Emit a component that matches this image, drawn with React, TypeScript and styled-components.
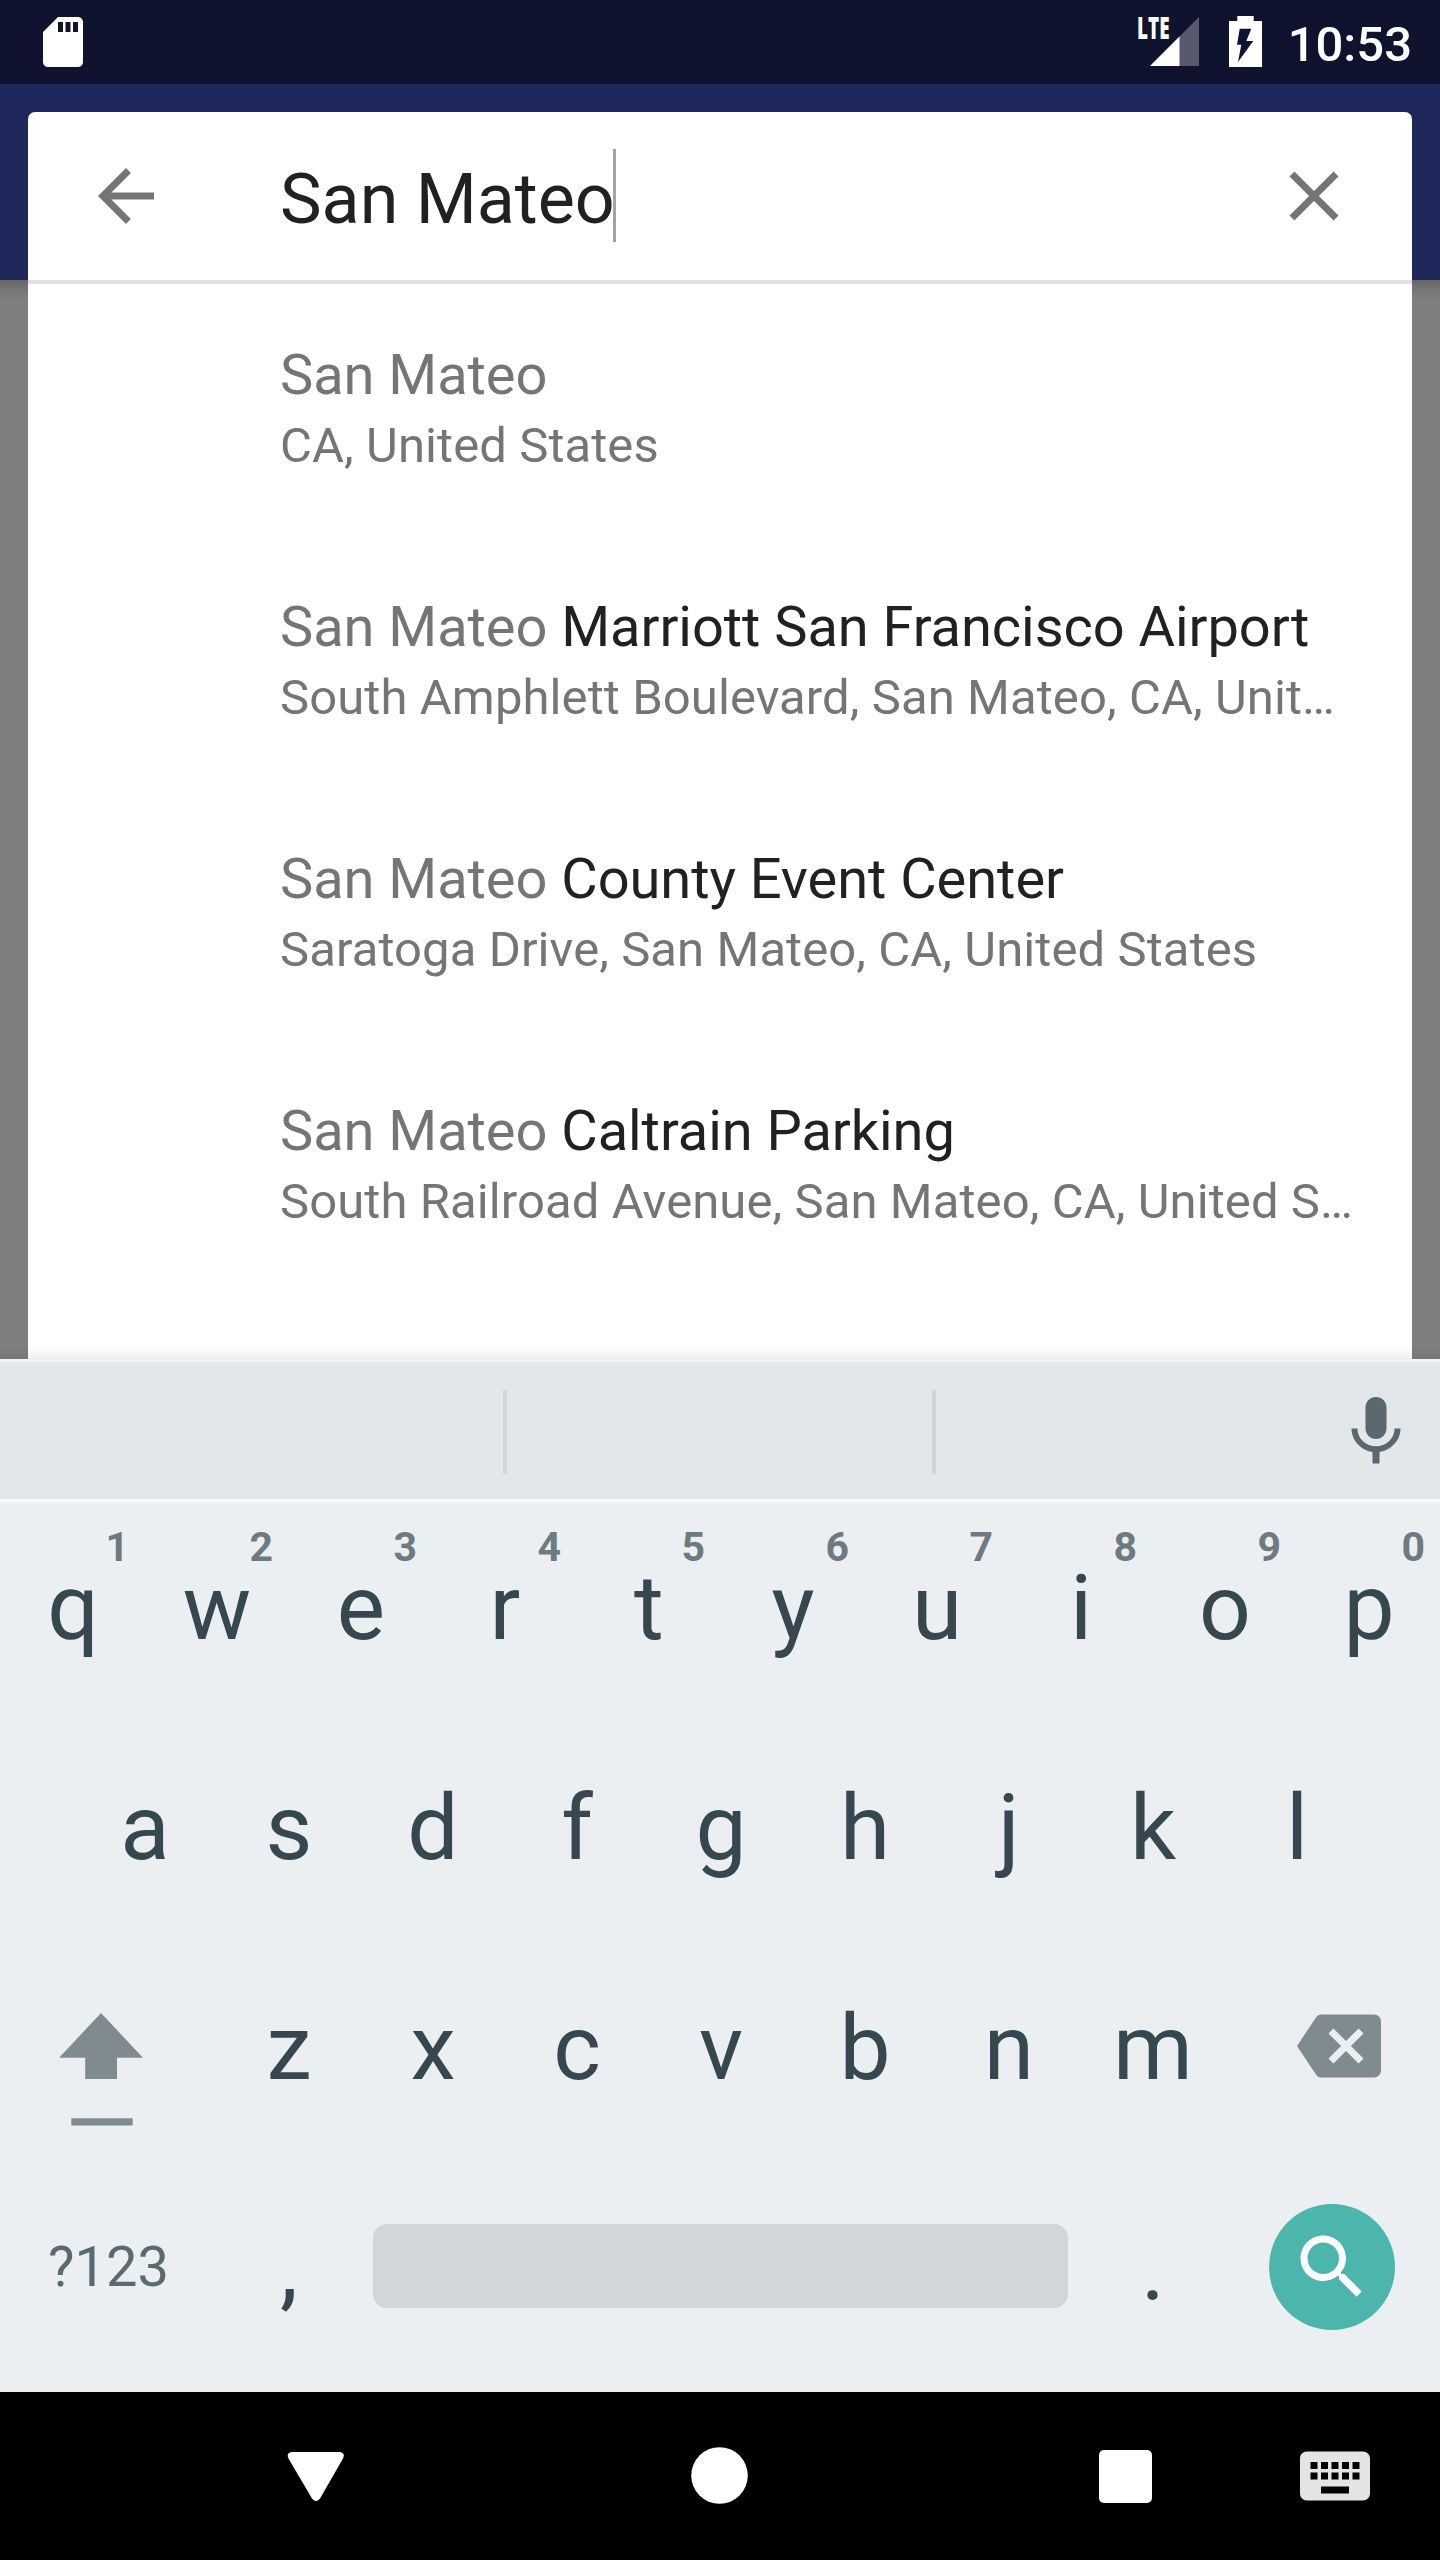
import React from "react";
import styled, { createGlobalStyle } from "styled-components";

const GlobalStyle = createGlobalStyle`
  * { box-sizing: border-box; }
  body {
    margin: 0;
    background: #7f7f7f;
    font-family: Roboto, "Liberation Sans", sans-serif;
  }
  svg { display: block; flex: none; }
`;

const Screen = styled.div`
  width: 1440px;
  height: 2560px;
  display: flex;
  flex-direction: column;
  overflow: hidden;
  background: #7f7f7f;
`;

const StatusBar = styled.header`
  flex: none;
  height: 84px;
  display: flex;
  align-items: flex-start;
  padding: 0 28px 0 33px;
  background: #0f132e;
  color: #fff;
`;

const SdIcon = styled.svg`
  margin-top: 12px;
`;

const StatusIcons = styled.div`
  margin-left: auto;
  display: flex;
`;

const Signal = styled.div`
  position: relative;
  width: 49px;
  margin: 17px 30px 0 0;
`;

const NetworkLabel = styled.span`
  position: absolute;
  left: -13px;
  top: -4px;
  font: 800 30px/30px "Open Sans", "Noto Sans", sans-serif;
  transform: scaleX(0.63);
  transform-origin: left center;
`;

const Battery = styled.svg`
  margin: 16px 26px 0 0;
`;

const Clock = styled.span`
  margin-top: 16px;
  font-size: 49px;
  line-height: 58px;
  font-weight: 500;
`;

const Backdrop = styled.main`
  flex: none;
  height: 1275px;
  padding: 28px 28px 0;
  background: linear-gradient(
    to bottom,
    #1f285b 196px,
    #656565 196px,
    #767676 206px,
    #7f7f7f 218px,
    #7f7f7f 1260px,
    #777 1275px
  );
`;

const Card = styled.section`
  height: 1247px;
  border-radius: 7px 7px 0 0;
  background: linear-gradient(to bottom, #fff 1231px, #fbfbfb 1238px, #eee 1247px);
`;

const SearchBar = styled.div`
  height: 172px;
  display: flex;
  align-items: flex-start;
  padding: 42px 56px 0;
  border-bottom: 4px solid #e0e0e0;
`;

const Query = styled.div`
  flex: 1;
  display: flex;
  margin: 4px 0 0 112px;
  color: #212121;
  font-size: 70px;
  line-height: 82px;
  white-space: pre;
`;

const Caret = styled.span`
  width: 3px;
  height: 93px;
  margin: -9px 0 0 -2px;
  background: #a4a4a4;
`;

const Results = styled.ul`
  list-style: none;
  margin: 0;
  padding: 0;
`;

const Result = styled.li`
  height: 252px;
  padding: 58px 40px 0 252px;
  color: #757575;
  white-space: nowrap;
`;

const Name = styled.div`
  font-size: 56px;
  line-height: 66px;
  letter-spacing: -0.05px;
`;

const Rest = styled.span`
  color: #212121;
`;

const Address = styled.div`
  margin-top: 9px;
  font-size: 49px;
  line-height: 58px;
  letter-spacing: 0.09px;
`;

const Suggestions = styled.div`
  flex: none;
  height: 144px;
  display: flex;
  align-items: flex-start;
  padding: 28px 22px 0 0;
  border-top: 3px solid #f0f1f1;
  border-bottom: 4px solid #f5f7f9;
  background: #e3e7ea;
`;

const Slot = styled.div<{ $width: number; $divided?: boolean }>`
  width: ${(p) => p.$width}px;
  height: 84px;
  border-right: ${(p) => (p.$divided ? "4px solid #d0d5d8" : "0")};
`;

const Keyboard = styled.section`
  flex: none;
  height: 889px;
  background: #ebeff2;
  color: #37474f;
`;

const KeyRow = styled.div`
  height: 220px;
  display: flex;
  justify-content: center;
`;

const Key = styled.div<{ $width?: number }>`
  position: relative;
  width: ${(p) => p.$width ?? 144}px;
  height: 220px;
  padding: 52px 0 0 ${(p) => (p.$width ? 0 : 2)}px;
  display: flex;
  justify-content: center;
  align-items: flex-start;
  font-size: 91px;
  line-height: 106px;
`;

const Hint = styled.span`
  position: absolute;
  top: 20px;
  right: 15px;
  font-size: 41px;
  line-height: 48px;
  font-weight: 700;
  color: #6e7a80;
`;

const ModeLabel = styled.span`
  margin: 19px 0 0 1px;
  font-size: 56px;
  line-height: 66px;
  color: #5b6a70;
`;

const SpaceBar = styled.div`
  width: 695px;
  height: 84px;
  margin-top: 9px;
  border-radius: 14px;
  background: #d1d6d9;
`;

const SearchKey = styled.div`
  width: 126px;
  height: 126px;
  margin-top: -11px;
  padding: 21px;
  border-radius: 50%;
  background: #4db6ac;
`;

const KeyIcon = styled.svg<{ $top: number; $left?: number }>`
  margin: ${(p) => p.$top}px 0 0 ${(p) => p.$left ?? 0}px;
`;

const NavBar = styled.nav`
  flex: none;
  height: 168px;
  display: grid;
  grid-template-columns: 192px 248px 560px 252px 166px;
  align-items: center;
  justify-items: center;
  background: #000;
`;

const NavCell = styled.div<{ $column: number }>`
  grid-column: ${(p) => p.$column};
`;

const results = [
  { rest: "", address: "CA, United States" },
  { rest: "Marriott San Francisco Airport", address: "South Amphlett Boulevard, San Mateo, CA, Unit…" },
  { rest: "County Event Center", address: "Saratoga Drive, San Mateo, CA, United States" },
  { rest: "Caltrain Parking", address: "South Railroad Avenue, San Mateo, CA, United S…" },
];

const topKeys = "qwertyuiop".split("");
const homeKeys = "asdfghjkl".split("");
const bottomKeys = "zxcvbnm".split("");

export default function App() {
  return (
    <>
      <GlobalStyle />
      <Screen>
        <StatusBar>
          <SdIcon width="60" height="60" viewBox="0 0 24 24" fill="#fff">
            <path d="M18 2h-8L4 8v12c0 1.1.9 2 2 2h12c1.1 0 2-.9 2-2V4c0-1.1-.9-2-2-2zm-6 6h-2V4h2v4zm3 0h-2V4h2v4zm3 0h-2V4h2v4z" />
          </SdIcon>
          <StatusIcons>
            <Signal>
              <NetworkLabel>LTE</NetworkLabel>
              <svg width="49" height="49" viewBox="0 0 49 49">
                <path d="M0 49H49V0z" fill="#fff" fillOpacity="0.3" />
                <path d="M0 49H29.5V19.5z" fill="#fff" />
              </svg>
            </Signal>
            <Battery width="33" height="51" viewBox="0 0 33 51">
              <path
                fill="#fff"
                fillRule="evenodd"
                d="M8.3 0h16.4v5H33v46H0V5h8.3zM10.7 12.7 8 28.7h4.3L9 46 24.3 25h-7l5-12.3z"
              />
            </Battery>
            <Clock>10:53</Clock>
          </StatusIcons>
        </StatusBar>

        <Backdrop>
          <Card>
            <SearchBar>
              <svg width="84" height="84" viewBox="0 0 24 24" fill="#757575">
                <path d="M20 11H7.83l5.59-5.59L12 4l-8 8 8 8 1.41-1.41L7.83 13H20v-2z" />
              </svg>
              <Query>
                San Mateo
                <Caret />
              </Query>
              <svg width="84" height="84" viewBox="0 0 24 24" fill="#757575">
                <path d="M19 6.41L17.59 5 12 10.59 6.41 5 5 6.41 10.59 12 5 17.59 6.41 19 12 13.41 17.59 19 19 17.59 13.41 12z" />
              </svg>
            </SearchBar>
            <Results>
              {results.map((item) => (
                <Result key={item.address}>
                  <Name>
                    San Mateo <Rest>{item.rest}</Rest>
                  </Name>
                  <Address>{item.address}</Address>
                </Result>
              ))}
            </Results>
          </Card>
        </Backdrop>

        <Suggestions>
          <Slot $width={507} $divided />
          <Slot $width={429} $divided />
          <Slot $width={398} />
          <svg width="84" height="84" viewBox="0 0 24 24" fill="#5b686f">
            <path d="M12 14c1.66 0 3-1.34 3-3V5c0-1.66-1.34-3-3-3S9 3.34 9 5v6c0 1.66 1.34 3 3 3zm5.3-3c0 3-2.54 5.1-5.3 5.1S6.7 14 6.7 11H5c0 3.41 2.72 6.23 6 6.72V21h2v-3.28c3.28-.48 6-3.3 6-6.72h-1.7z" />
          </svg>
        </Suggestions>

        <Keyboard>
          <KeyRow>
            {topKeys.map((letter, i) => (
              <Key key={letter}>
                {letter}
                <Hint>{(i + 1) % 10}</Hint>
              </Key>
            ))}
          </KeyRow>
          <KeyRow>
            {homeKeys.map((letter) => (
              <Key key={letter}>{letter}</Key>
            ))}
          </KeyRow>
          <KeyRow>
            <Key $width={216}>
              <KeyIcon $top={18} width="96" height="113" viewBox="0 0 96 113" fill="#808b8f">
                <path d="M41 0 83 44.8H57V66H25.2V44.8H-1z" />
                <path d="M11.3 105.3h61.4v7.2H11.3z" />
              </KeyIcon>
            </Key>
            {bottomKeys.map((letter) => (
              <Key key={letter}>{letter}</Key>
            ))}
            <Key $width={216}>
              <KeyIcon $top={9} $left={14} width="84" height="84" viewBox="0 0 24 24" fill="#808b8f">
                <path d="M22 3H7c-.69 0-1.23.35-1.59.88L0 12l5.41 8.11c.36.53.9.89 1.59.89h15c1.1 0 2-.9 2-2V5c0-1.1-.9-2-2-2zm-3 12.59L17.59 17 14 13.41 10.41 17 9 15.59 12.59 12 9 8.41 10.41 7 14 10.59 17.59 7 19 8.41 15.41 12 19 15.59z" />
              </KeyIcon>
            </Key>
          </KeyRow>
          <KeyRow>
            <Key $width={216}>
              <ModeLabel>?123</ModeLabel>
            </Key>
            <Key>,</Key>
            <Key $width={720}>
              <SpaceBar />
            </Key>
            <Key>.</Key>
            <Key $width={216}>
              <SearchKey>
                <svg width="84" height="84" viewBox="0 0 24 24" fill="#fff">
                  <path d="M15.5 14h-.79l-.28-.27C15.41 12.59 16 11.11 16 9.5 16 5.91 13.09 3 9.5 3S3 5.91 3 9.5 5.91 16 9.5 16c1.61 0 3.09-.59 4.23-1.57l.27.28v.79l5 4.99L20.49 19l-4.99-5zm-6 0C7.01 14 5 11.99 5 9.5S7.01 5 9.5 5 14 7.01 14 9.5 11.99 14 9.5 14z" />
                </svg>
              </SearchKey>
            </Key>
          </KeyRow>
        </Keyboard>

        <NavBar>
          <NavCell $column={2}>
            <svg width="58" height="58" viewBox="0 0 58 58" fill="#fff">
              <path d="M4.500 5H53Q58.500 6 56 11.500L33 51.500Q29 56.500 25 51.500L1.500 11.500Q-1 6 4.500 5z" />
            </svg>
          </NavCell>
          <NavCell $column={3}>
            <svg width="58" height="58" viewBox="0 0 58 58" fill="#fff">
              <circle cx="28.500" cy="28.500" r="28.300" />
            </svg>
          </NavCell>
          <NavCell $column={4}>
            <svg width="54" height="54" viewBox="0 0 54 54" fill="#fff">
              <rect y="1" width="53" height="53" rx="5" />
            </svg>
          </NavCell>
          <NavCell $column={5}>
            <svg width="84" height="85" viewBox="0 0 24 24.286" fill="#e4e4e4">
              <path d="M20 5H4c-1.1 0-2 .9-2 2v10c0 1.1.9 2 2 2h16c1.1 0 2-.9 2-2V7c0-1.1-.9-2-2-2zm-9 3h2v2h-2V8zm0 3h2v2h-2v-2zM8 8h2v2H8V8zm0 3h2v2H8v-2zm-1 2H5v-2h2v2zm0-3H5V8h2v2zm9 7H8v-2h8v2zm0-4h-2v-2h2v2zm0-3h-2V8h2v2zm3 3h-2v-2h2v2zm0-3h-2V8h2v2z" />
            </svg>
          </NavCell>
        </NavBar>
      </Screen>
    </>
  );
}
